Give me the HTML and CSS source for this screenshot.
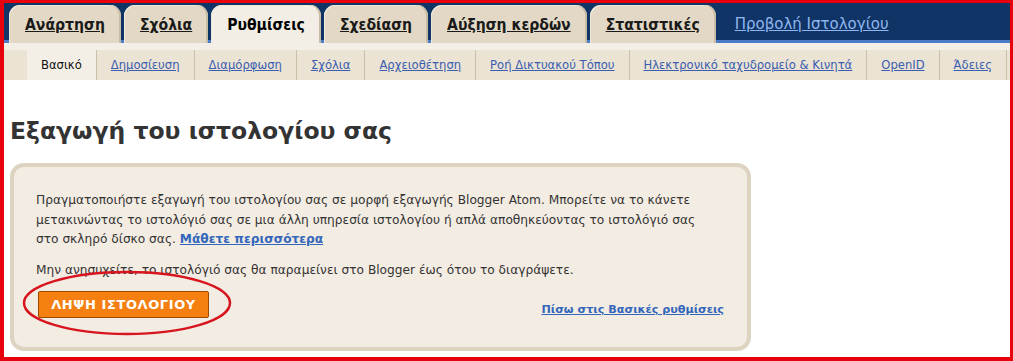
FILE: index.html
```html
<!DOCTYPE html>
<html lang="el">
<head>
<meta charset="utf-8">
<title>Εξαγωγή ιστολογίου</title>
<link rel="stylesheet" href="styles.css">
</head>
<body>
<div class="frame">
  <nav class="topnav">
    <a class="tab" href="#">Ανάρτηση</a>
    <a class="tab" href="#">Σχόλια</a>
    <span class="tab active">Ρυθμίσεις</span>
    <a class="tab" href="#">Σχεδίαση</a>
    <a class="tab" href="#">Αύξηση κερδών</a>
    <a class="tab" href="#">Στατιστικές</a>
    <a class="view" href="#">Προβολή Ιστολογίου</a>
  </nav>
  <nav class="subnav">
    <span class="sub active">Βασικό</span>
    <a class="sub" href="#">Δημοσίευση</a>
    <a class="sub" href="#">Διαμόρφωση</a>
    <a class="sub" href="#">Σχόλια</a>
    <a class="sub" href="#">Αρχειοθέτηση</a>
    <a class="sub" href="#">Ροή Δικτυακού Τόπου</a>
    <a class="sub" href="#">Ηλεκτρονικό ταχυδρομείο &amp; Κινητά</a>
    <a class="sub" href="#">OpenID</a>
    <a class="sub" href="#">Άδειες</a>
  </nav>
  <main class="content">
    <h1 class="title">Εξαγωγή του ιστολογίου σας</h1>
    <section class="box">
      <p class="text">Πραγματοποιήστε εξαγωγή του ιστολογίου σας σε μορφή εξαγωγής Blogger Atom. Μπορείτε να το κάνετε μετακινώντας το ιστολόγιό σας σε μια άλλη υπηρεσία ιστολογίου ή απλά αποθηκεύοντας το ιστολόγιό σας στο σκληρό δίσκο σας. <a class="more" href="#">Μάθετε περισσότερα</a></p>
      <p class="text">Μην ανησυχείτε, το ιστολόγιό σας θα παραμείνει στο Blogger έως ότου το διαγράψετε.</p>
      <div class="actions">
        <button class="download" type="button">ΛΗΨΗ ΙΣΤΟΛΟΓΙΟΥ</button>
        <a class="back" href="#">Πίσω στις Βασικές ρυθμίσεις</a>
      </div>
      <svg class="circle" width="214" height="70" viewBox="0 0 214 70" aria-hidden="true">
        <ellipse cx="107" cy="35" rx="103" ry="31" fill="none" stroke="#d8141e" stroke-width="2.5"/>
      </svg>
    </section>
  </main>
</div>
</body>
</html>
```
FILE: styles.css
```css
html, body {
  margin: 0;
  padding: 0;
  background: #ffffff;
}

.frame {
  box-sizing: border-box;
  width: 1013px;
  height: 361px;
  border-style: solid;
  border-color: #e8000c;
  border-width: 3px 3px 4px 4px;
  background: #ffffff;
  overflow: hidden;
  font-family: "DejaVu Sans", Verdana, sans-serif;
}

.topnav {
  display: flex;
  align-items: flex-end;
  height: 40px;
  padding-left: 5px;
  background: linear-gradient(to top, #4a7cc8 0, #4a7cc8 3px, #0f3465 3px);
}

.tab {
  display: flex;
  align-items: center;
  height: 38px;
  padding: 2px 16px 0 16px;
  margin-right: 3px;
  box-sizing: border-box;
  background: #e2d8c5;
  border-radius: 11px 11px 0 0;
  box-shadow: inset -2px 0 0 #c9bca4, inset 1px 1px 0 #efe8dc;
  color: #1a1a1a;
  font-size: 15.6px;
  font-stretch: condensed;
  font-weight: bold;
  text-decoration: underline;
  white-space: nowrap;
}

.tab.active {
  background: #f3eee5;
  text-decoration: none;
  color: #000;
}

.view {
  align-self: center;
  margin-left: 16px;
  margin-top: 2px;
  color: #8fb6f0;
  font-size: 15px;
  text-decoration: underline;
  white-space: nowrap;
}

.subnav {
  display: flex;
  height: 30px;
  padding-left: 23px;
  border-top: 7px solid #f4efe6;
  background: #ebe3d3;
}

.sub {
  display: flex;
  align-items: center;
  padding: 0 14px;
  border-right: 1px solid #cbbfa8;
  color: #3a5db0;
  font-size: 11.6px;
  text-decoration: underline;
  white-space: nowrap;
}

.sub.active {
  background: #f4efe6;
  color: #111;
  text-decoration: none;
}

.content {
  padding: 0 6px;
}

.title {
  margin: 36px 0 17px;
  font-size: 23.5px;
  line-height: 30px;
  font-weight: bold;
  color: #333333;
}

.box {
  position: relative;
  width: 741px;
  height: 188px;
  box-sizing: border-box;
  padding: 24px 28px 0 22px;
  border: 4px solid #ddd3c1;
  border-radius: 14px;
  background: #f3ece3;
  color: #333333;
}

.text {
  margin: 0 0 11px;
  font-size: 12.2px;
  line-height: 19.5px;
}

.more {
  color: #3366bb;
  font-weight: bold;
}

.actions {
  display: flex;
  justify-content: space-between;
  align-items: flex-end;
  margin-top: 11px;
  margin-right: -5px;
  padding-left: 2px;
}

.download {
  width: 171px;
  height: 27px;
  padding: 0;
  border: 1px solid #9a4b00;
  border-radius: 2px;
  background: #f57f10;
  color: #ffffff;
  font-family: "DejaVu Sans", Verdana, sans-serif;
  font-size: 13px;
  font-weight: bold;
  letter-spacing: 0.6px;
}

.back {
  margin-bottom: 2px;
  color: #3366bb;
  font-size: 11.2px;
  font-weight: bold;
}

.circle {
  position: absolute;
  left: 6px;
  top: 101px;
}
```
